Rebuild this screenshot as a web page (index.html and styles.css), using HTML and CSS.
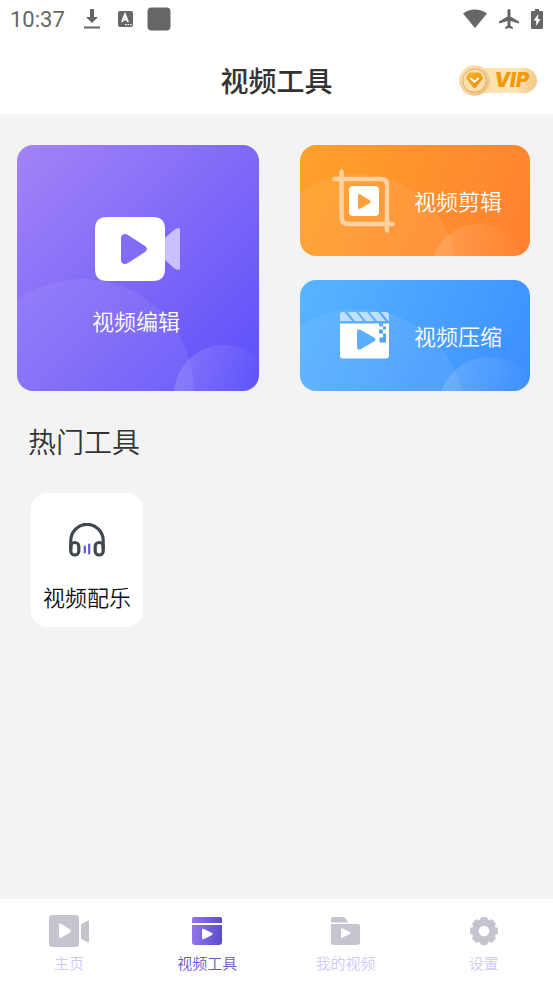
FILE: index.html
```html
<!DOCTYPE html>
<html lang="zh-CN">
<head>
<meta charset="utf-8">
<meta name="viewport" content="width=device-width, initial-scale=1">
<title>视频工具</title>
<link rel="stylesheet" href="styles.css">
</head>
<body>
<div class="app">
  <div class="status">
    <div class="status-left">
      <span class="clock">10:37</span>
      <svg width="16" height="22" viewBox="0 0 16 22" fill="#666"><path d="M6 1h4v8h4l-6 6-6-6h4zM0 18.500h16v2H0z"/></svg>
      <svg class="badge-icon" width="15" height="16" viewBox="0 0 15 16"><rect width="15" height="16" rx="2" fill="#666"/><path d="M4 11 7 3.500 10 11M5 8.500h4" fill="none" stroke="#fff" stroke-width="2"/><path d="M7 13h1.500v1.200H7zM9.500 13H11v1.200H9.500zM12 13h1.500v1.200H12z" fill="#fff"/></svg>
      <svg width="24" height="24" viewBox="0 0 24 24"><rect x=".5" y=".5" width="23" height="23" rx="4" fill="#666"/></svg>
    </div>
    <div class="status-right">
      <svg width="24" height="20" viewBox="0 0 24 20" fill="#666"><path d="M0 4.500C7-.8 17-.8 24 4.500L12 19z"/></svg>
      <svg width="20" height="20" viewBox="0 0 20 20" fill="#666"><path d="M10 0c1 0 1.500.8 1.500 1.600V7.500L20 12.500v2l-8.500-2.500v4.500l2.300 1.800V20L10 19l-3.800 1v-1.700l2.300-1.800V12L0 14.500v-2l8.500-5V1.600C8.500.8 9 0 10 0z"/></svg>
      <svg width="12" height="20" viewBox="0 0 12 20"><path d="M4 0h4v2h3q1 0 1 1v16q0 1-1 1H1q-1 0-1-1V3q0-1 1-1h3z" fill="#666"/><path d="M7.300 5 2.600 11.500h2.600V17l4.300-7H7z" fill="#fff"/></svg>
    </div>
  </div>
  <header class="bar">
    <h1>视频工具</h1>
    <button class="vip" aria-label="VIP">
      <svg class="vip-coin" width="31" height="31" viewBox="0 0 31 31">
        <defs>
          <linearGradient id="coin" x1="0" y1="0" x2="1" y2="1"><stop offset="0" stop-color="#ffe6b6"/><stop offset="1" stop-color="#e8bc78"/></linearGradient>
          <linearGradient id="gem" x1="0" y1="0" x2="1" y2="1"><stop offset="0" stop-color="#fab52e"/><stop offset="1" stop-color="#e98a0a"/></linearGradient>
        </defs>
        <circle cx="15.500" cy="15.500" r="15.200" fill="url(#coin)"/>
        <circle cx="15.500" cy="15.500" r="11.700" fill="#fbdfae" stroke="#dda24c" stroke-width=".8"/>
        <path d="M11 7.500h9q1 0 1.500.8l2.300 4q.5 1-.2 1.800l-6.800 8.300q-1.200 1.200-2.500 0L7.400 14.100q-.7-.8-.2-1.800l2.300-4q.5-.8 1.500-.8z" fill="url(#gem)"/>
        <path d="m11.800 13.500 3.700 3.400 3.700-3.400" fill="none" stroke="#fff" stroke-width="1.800" stroke-linecap="round"/>
      </svg>
      <span>VIP</span>
    </button>
  </header>
  <main>
    <section class="cards">
      <button class="card edit">
        <svg class="deco" viewBox="0 0 242 246" preserveAspectRatio="xMidYMax slice">
          <defs><linearGradient id="bubble" x1="0" y1="0" x2="1" y2="0"><stop offset="0" stop-color="#fff" stop-opacity=".16"/><stop offset="1" stop-color="#fff" stop-opacity="0"/></linearGradient></defs>
          <circle cx="65" cy="246" r="112" fill="#fff" fill-opacity=".07"/><circle cx="207" cy="250" r="50" fill="url(#bubble)"/>
        </svg>
        <svg class="icon" width="86" height="64" viewBox="0 0 86 64">
          <path d="M70 21 79 13q6-4 6 0v38q0 4-6 0l-9-8z" fill="#cbc0fe"/>
          <path fill-rule="evenodd" fill="#fff" d="M12 0h46q12 0 12 12v40q0 12-12 12H12Q0 64 0 52V12Q0 0 12 0zM26 21v22c0 4 4 5 7 3l17-11q4-3 0-6L33 18c-3-2-7-1-7 3z"/>
        </svg>
        <span>视频编辑</span>
      </button>
      <button class="card cut">
        <svg class="deco" viewBox="0 0 230 111" preserveAspectRatio="xMidYMax slice"><circle cx="57" cy="129" r="100" fill="#fff" fill-opacity=".07"/><circle cx="179" cy="127" r="48" fill="url(#bubble)"/></svg>
        <svg class="icon" width="64" height="64" viewBox="0 0 64 64">
          <path d="M9.500 2.500V48q0 7 7 7h44M2.500 10H49q6 0 6 6v45.500" fill="none" stroke="#ffd2a0" stroke-width="4.500" stroke-linecap="round"/>
          <path fill-rule="evenodd" fill="#fff" d="M21 17h22q4 0 4 4v22q0 4-4 4H21q-4 0-4-4V21q0-4 4-4zM26 27v11q0 3 2.500 1.500L38 34q2-1.200 0-2.500l-9.500-6Q26 24 26 27z"/>
        </svg>
        <span>视频剪辑</span>
      </button>
      <button class="card zip">
        <svg class="deco" viewBox="0 0 230 111" preserveAspectRatio="xMidYMax slice"><circle cx="58" cy="136" r="107" fill="#fff" fill-opacity=".07"/><circle cx="189" cy="127" r="50" fill="url(#bubble)"/></svg>
        <svg class="icon" width="64" height="64" viewBox="0 0 64 64">
          <g transform="translate(8 8)">
            <path fill="#c0e0ff" d="M3 0h1.500L12 9H0V3q0-3 3-3zM7.500 0h8.500L23.500 9H15zM18.500 0H27L34.500 9H26zM29.500 0H38L45.500 9H37zM41 0h5q3 0 3 3v6h-.5z"/>
            <path fill="#fff" fill-rule="evenodd" d="M0 11.500h39v3h4v-3h6v32q0 3-3 3H3q-3 0-3-3zM17 20v15q0 4 4 2l13-7.500q3-2 0-4L21 18q-4-2-4 2z"/>
            <path fill="#50a5ff" d="M43 14.500h3v3h-3zM39 17.500h4v4h-4zM43 21.500h3v9h-6.500v-5H43z"/>
          </g>
        </svg>
        <span>视频压缩</span>
      </button>
    </section>
    <h2>热门工具</h2>
    <section class="tools">
      <button class="tool">
        <svg width="36" height="34" viewBox="0 0 36 34">
          <g fill="none" stroke="#3f474f" stroke-width="3.200"><path d="M1.800 26V17.500a16.200 16.200 0 0 1 32.400 0V26"/><rect x="1.800" y="19.500" width="8" height="12.500" rx="3.800"/><rect x="26.200" y="19.500" width="8" height="12.500" rx="3.800"/></g>
          <path d="M15.800 23.500v6M20.200 21.500v9" stroke="#5d55d6" stroke-width="2.200" stroke-linecap="round"/>
        </svg>
        <span>视频配乐</span>
      </button>
    </section>
  </main>
  <nav class="tabs">
    <a href="#home">
      <svg width="40" height="32" viewBox="0 0 40 32" fill="#c6c5cf"><path fill-rule="evenodd" d="M3 0h24q3 0 3 3v26q0 3-3 3H3q-3 0-3-3V3q0-3 3-3zM10 10v11q0 3 2.500 1.500L21 17.500q2-1.500 0-3L12.500 9Q10 7.500 10 10z"/><path d="M32 10.500q0-1 1-1.700l5.500-3Q40 5 40 7v19q0 2-1.500 1.200l-5.500-3q-1-.7-1-1.700z"/></svg>
      <span>主页</span>
    </a>
    <a href="#tools" class="active" aria-current="page">
      <svg width="30" height="32" viewBox="0 0 30 32"><defs><linearGradient id="act"><stop offset="0" stop-color="#9475ea"/><stop offset="1" stop-color="#5b4ccb"/></linearGradient></defs><path fill="url(#act)" fill-rule="evenodd" d="M2 2h26q2 0 2 2v4H0V4q0-2 2-2zM0 10h30v17q0 3-3 3H3q-3 0-3-3zM10 15v8q0 2 2 1l8-4q1.500-1 0-2l-8-4q-2-1-2 1z"/></svg>
      <span>视频工具</span>
    </a>
    <a href="#mine">
      <svg width="30" height="32" viewBox="0 0 30 32" fill="#c6c5cf"><path fill-rule="evenodd" d="M3 2h9q2 0 3 2l2.500 3.500H0V4q0-2 3-2zM0 9h27q2 0 2 2v16q0 3-3 3H3q-3 0-3-3zM10 14.500v7q0 2 1.800 1l7-3.600q1.400-.9 0-1.800l-7-3.600q-1.800-1-1.800 1z"/></svg>
      <span>我的视频</span>
    </a>
    <a href="#settings">
      <svg width="30" height="32" viewBox="0 0 30 32"><g fill="#c6c5cf"><circle cx="15" cy="16" r="12"/><path d="M11 5q0-3 2.500-3h3Q19 2 19 5v22q0 3-2.500 3h-3Q11 30 11 27z" id="tooth"/><use href="#tooth" transform="rotate(45 15 16)"/><use href="#tooth" transform="rotate(90 15 16)"/><use href="#tooth" transform="rotate(135 15 16)"/></g><circle cx="15" cy="16" r="5.300" fill="#fff"/></svg>
      <span>设置</span>
    </a>
  </nav>
</div>
</body>
</html>
```
FILE: styles.css
```css
* { box-sizing: border-box; }
body {
  margin: 0;
  background: #f3f3f3;
  font-family: "Noto Sans CJK SC", sans-serif;
  font-weight: 350;
  color: #333;
}
button {
  border: 0;
  padding: 0;
  font: inherit;
  color: inherit;
  background: none;
  cursor: pointer;
}
svg { display: block; flex: none; }
.app {
  min-height: 100vh;
  display: flex;
  flex-direction: column;
}
.status {
  display: flex;
  justify-content: space-between;
  align-items: center;
  height: 37px;
  padding: 0 10px;
  background: #fff;
}
.status-left, .status-right { display: flex; align-items: center; }
.status-left { gap: 16px; }
.status-right { gap: 12px; }
.clock {
  margin-right: 3px;
  padding-top: 2px;
  font: 22px/36px Roboto, sans-serif;
  color: #666;
}
.badge-icon { margin: 0 -2px 0 2px; }
.bar {
  display: grid;
  grid-template-columns: 1fr auto 1fr;
  align-items: center;
  height: 77px;
  padding: 9px 16px 0;
  background: #fff;
}
h1 {
  grid-column: 2;
  margin: 0;
  font-size: 28px;
  line-height: 40px;
  font-weight: 500;
}
.vip {
  justify-self: end;
  display: flex;
  align-items: center;
  height: 25px;
  padding-right: 8px;
  border-radius: 13px;
  background: linear-gradient(100deg, #f8d9a0, #ffe6b9 70%, #f0c582);
  font: italic 900 20px/25px Inter, sans-serif;
  color: #f09a0c;
}
.vip-coin { margin-right: 4px; }
main { flex: 1; }
.cards {
  display: grid;
  grid-template-columns: 242fr 230fr;
  grid-template-rows: 111px 111px;
  gap: 24px 41px;
  padding: 31px 23px 0 17px;
}
.card {
  position: relative;
  display: flex;
  align-items: center;
  overflow: hidden;
  border-radius: 16px;
  color: #fff;
  font-size: 22px;
  line-height: 32px;
}
.card span, .card .icon { position: relative; }
.card .deco {
  position: absolute;
  inset: 0;
  width: 100%;
  height: 100%;
}
.edit {
  grid-row: span 2;
  flex-direction: column;
  justify-content: center;
  gap: 23px;
  padding-top: 16px;
  background: linear-gradient(135deg, #a384f6, #7c66f8 55%, #5b4ffa);
}
.edit span { padding-right: 4px; }
.cut, .zip { gap: 18px; padding-left: 32px; }
.cut span, .zip span { padding-bottom: 2px; }
.cut { background: linear-gradient(115deg, #ffa22a, #ff8030); }
.zip { background: linear-gradient(115deg, #58b5ff, #3c8eff); }
h2 {
  margin: 30px 28px 0;
  font-size: 28px;
  line-height: 40px;
  font-weight: 350;
}
.tools {
  display: flex;
  padding: 32px 31px;
}
.tool {
  display: flex;
  flex-direction: column;
  align-items: center;
  gap: 23px;
  padding: 30px 12px 15px;
  border-radius: 16px;
  background: #fff;
  color: #111;
  font-size: 22px;
  line-height: 32px;
}
.tabs {
  display: grid;
  grid-template-columns: repeat(4, 1fr);
  height: 85px;
  padding-top: 16px;
  background: #fff;
}
.tabs a {
  display: flex;
  flex-direction: column;
  align-items: center;
  gap: 5px;
  color: #cccbf5;
  font-size: 15px;
  line-height: 22px;
  text-decoration: none;
}
.tabs .active { color: #6a58d0; }
```
